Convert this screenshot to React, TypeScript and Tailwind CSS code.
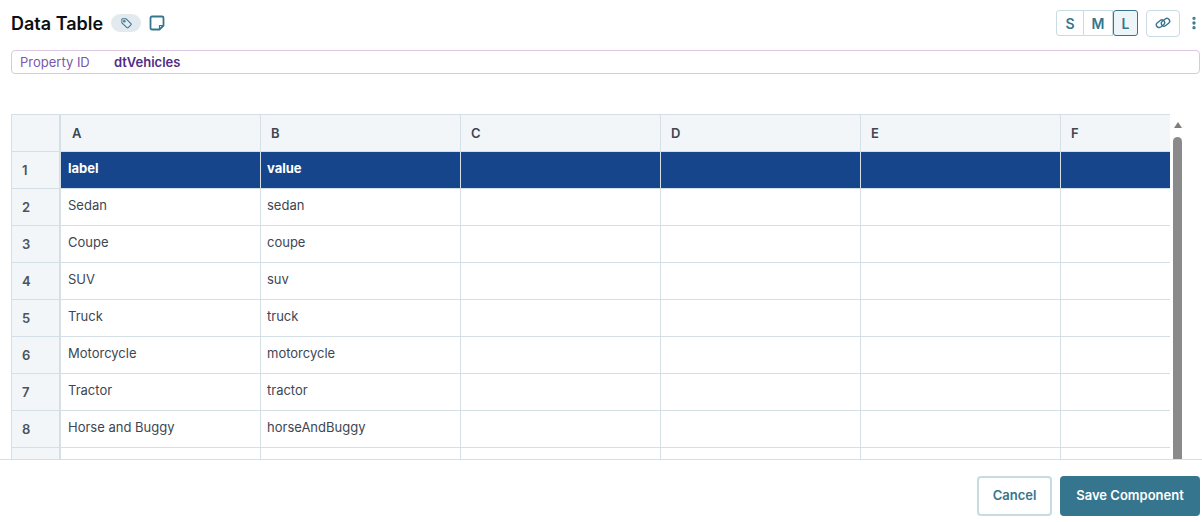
import { EllipsisVertical } from 'lucide-react';

const columns = ['A', 'B', 'C', 'D', 'E', 'F'];

const rows = [
    ['label', 'value'],
    ['Sedan', 'sedan'],
    ['Coupe', 'coupe'],
    ['SUV', 'suv'],
    ['Truck', 'truck'],
    ['Motorcycle', 'motorcycle'],
    ['Tractor', 'tractor'],
    ['Horse and Buggy', 'horseAndBuggy'],
    ['', ''],
];

function SizeButton({ label, active }: { label: string; active?: boolean }) {
    return (
        <div
            className={`flex h-[26px] items-center justify-center text-[14px] font-semibold text-[#35758d] ${active
                ? 'w-[25px] rounded-[3px] border border-[#35758d] bg-[#eef5f8]'
                : label === 'S'
                    ? 'w-[28px] rounded-l-[3px] border border-[#c7dbe1]'
                    : 'w-[29px] border-y border-r border-[#c7dbe1]'
                }`}
        >
            {label}
        </div>
    );
}

function TagIcon() {
    return (
        <svg viewBox="0 0 14 14" fill="none" stroke="#35758d" strokeWidth="1.1" strokeLinejoin="round" className="h-[13px] w-[13px]">
            <path d="M2 2.6a.6.6 0 0 1 .6-.6h4l5.2 5.2a.9.9 0 0 1 0 1.3l-3 3a.9.9 0 0 1-1.3 0L2 6.3Z" />
            <circle cx="4.7" cy="4.7" r="0.8" />
        </svg>
    );
}

function NoteIcon() {
    return (
        <svg viewBox="0 0 16 16" fill="none" stroke="#35758d" strokeWidth="1.8" strokeLinejoin="round" className="ml-[8px] h-[16px] w-[16px]">
            <path d="M3 1.5h10a1.5 1.5 0 0 1 1.5 1.5v7.5l-4 4H3A1.5 1.5 0 0 1 1.5 13V3A1.5 1.5 0 0 1 3 1.5Z" />
            <path d="M14 10.5h-3.5V14" strokeWidth="1.2" />
        </svg>
    );
}

function ChainIcon() {
    return (
        <svg viewBox="0 0 16 14" fill="none" stroke="#35758d" strokeWidth="1.4" className="h-[14px] w-[16px]">
            <rect x="1" y="5" width="9" height="5.4" rx="2.7" transform="rotate(-38 5.5 7.7)" />
            <rect x="6" y="3.6" width="9" height="5.4" rx="2.7" transform="rotate(-38 10.5 6.3)" />
        </svg>
    );
}

function Cell({ text, header, col }: { text: string; header: boolean; col: number }) {
    return (
        <div
            className={`flex h-full shrink-0 items-center border-r pb-[2px] text-[13px] ${col === 5 ? 'w-[109px] border-r-0 pl-[7px]' : col === 1 ? 'w-[200px] pl-[6px]' : 'w-[200px] pl-[7px]'} ${header
                ? 'border-[#d5dfe6] bg-[#17458c] font-bold text-white'
                : 'border-[#d5dfe6] bg-white text-[#3d4653]'
                }`}
        >
            {text}
        </div>
    );
}

export default function App() {
    return (
        <div className="flex h-[522px] w-[1202px] flex-col overflow-hidden bg-white font-['Inter',sans-serif]">
            <div className="flex h-[50px] shrink-0 items-center pb-[4px] pl-[11px]">
                <h1 className="text-[18px] font-semibold text-[#0d0f12]">Data Table</h1>
                <div className="ml-2 flex h-[18px] w-[30px] items-center justify-center rounded-full bg-[#e3eaef]">
                    <TagIcon />
                </div>
                <NoteIcon />
                <div className="ml-auto flex items-center">
                    <SizeButton label="S" />
                    <SizeButton label="M" />
                    <SizeButton label="L" active />
                    <div className="ml-[8px] flex h-[27px] w-[34px] items-center justify-center rounded-[4px] border border-[#c7dbe1]">
                        <ChainIcon />
                    </div>
                    <EllipsisVertical className="ml-[6px] h-[16px] w-[16px] text-[#35758d]" strokeWidth={3} />
                </div>
            </div>

            <div className="mb-10 ml-[11px] mr-[2px] flex h-[24px] shrink-0 items-center rounded-[4px] border border-[#dcc6e4] pl-2 pt-px text-[13px]">
                <span className="w-[94px] text-[#7b57ad]">Property ID</span>
                <span className="font-semibold text-[#4f2d85]">dtVehicles</span>
            </div>

            <div className="flex min-h-0 flex-1 overflow-hidden border-b border-[#d5dfe6] pl-[11px]">
                <div className="w-[1159px] shrink-0 border-l border-t border-[#d5dfe6]">
                    <div className="flex h-[37px] border-b border-[#d5dfe6] bg-[#f3f6f8]">
                        <div className="w-[49px] shrink-0 border-r-2 border-[#d5dfe6]" />
                        {columns.map((c, i) => (
                            <div
                                key={c}
                                className={`flex shrink-0 items-center border-r border-[#d5dfe6] pt-px text-[13px] font-semibold text-[#3d4653] ${i === 5 ? 'w-[109px] border-r-0 pl-[10px]' : i === 0 ? 'w-[200px] pl-[11px]' : 'w-[200px] pl-[10px]'}`}
                            >
                                {c}
                            </div>
                        ))}
                    </div>
                    {rows.map((row, r) => (
                        <div key={r} className="flex h-[37px] border-b border-[#d5dfe6]">
                            <div className="flex w-[49px] shrink-0 items-center border-r-2 border-[#d5dfe6] bg-[#f3f6f8] pl-[10px] pt-[2px] text-[13px] font-semibold text-[#4a5360]">
                                {r < 8 ? r + 1 : ''}
                            </div>
                            {columns.map((c, i) => (
                                <Cell key={c} text={row[i] ?? ''} header={r === 0} col={i} />
                            ))}
                        </div>
                    ))}
                </div>
                <div className="ml-[3px] flex w-[9px] shrink-0 flex-col items-center pt-[8px]">
                    <div className="h-0 w-0 border-x-[4px] border-b-[6px] border-x-transparent border-b-[#7d7d7d]" />
                    <div className="mt-[9px] w-[9px] flex-1 rounded-t-full bg-[#8a8a8a]" />
                </div>
            </div>

            <div className="flex h-[62px] shrink-0 items-start justify-end gap-2 pr-[2px] pt-4">
                <button className="h-10 w-[75px] rounded-[4px] border-2 border-[#c7dbe1] bg-white text-[13px] font-semibold text-[#35758d]">
                    Cancel
                </button>
                <button className="h-10 w-[140px] rounded-[4px] bg-[#35758d] text-[13px] font-semibold text-white">
                    Save Component
                </button>
            </div>
        </div>
    );
}
